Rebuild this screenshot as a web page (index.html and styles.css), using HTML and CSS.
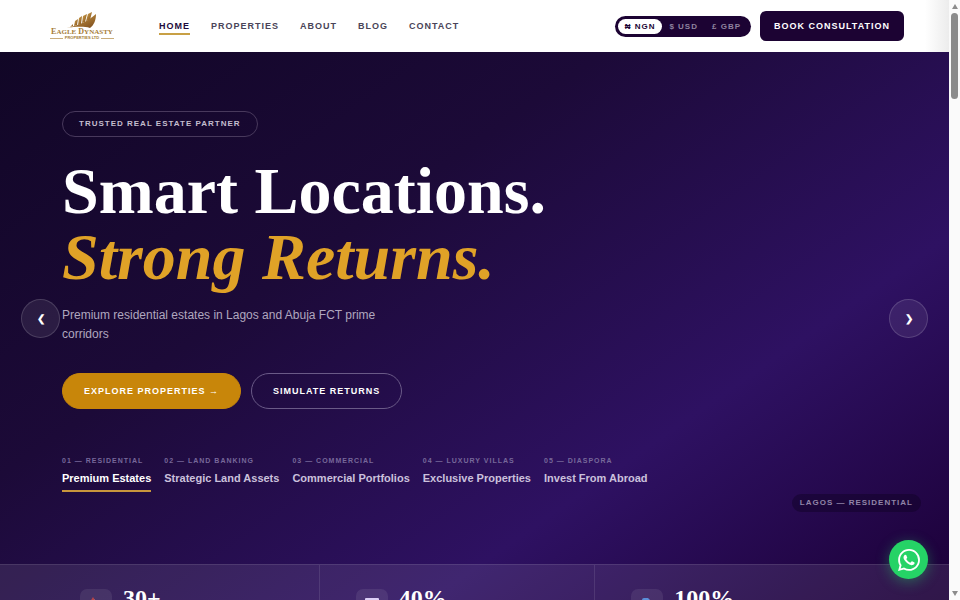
FILE: index.html
```
<!DOCTYPE html>
<html lang="en">
<head>
    <meta charset="UTF-8">
    <meta name="viewport" content="width=device-width, initial-scale=1">
    <title>Eagle Dynasty Properties Ltd</title>
    <link rel="stylesheet" href="styles.css">
</head>
<body>
<div class="window">
    <div class="page">
        <header class="header">
            <a class="logo" href="#">
                <svg class="logo-wing" width="34" height="18" viewBox="0 0 34 18" aria-hidden="true">
                    <defs>
                        <linearGradient id="gold" x1="0" y1="0" x2="1" y2="1">
                            <stop offset="0" stop-color="#d9a94e"/>
                            <stop offset="1" stop-color="#7a4a1c"/>
                        </linearGradient>
                    </defs>
                    <g fill="url(#gold)">
                        <path d="M5 15 L8 12 L8 14 Z"/>
                        <path d="M9 14 L10 9 L13 7 L12 13 Z"/>
                        <path d="M13 13 L14 6 L17 4 L16 12 Z"/>
                        <path d="M17 11 L18 4 L22 2 L20 10 Z"/>
                        <path d="M21 9 L23 2 L27 0 L25 8 Z"/>
                        <path d="M1 16 C12 14 22 10 31 2 C31 8 29 13 25 16 C18 14 10 15 1 16 Z"/>
                    </g>
                </svg>
                <span class="logo-name">E<small>AGLE</small> D<small>YNASTY</small></span>
                <span class="logo-sub">PROPERTIES LTD</span>
            </a>
            <nav class="nav">
                <a class="active" href="#">HOME</a>
                <a href="#">PROPERTIES</a>
                <a href="#">ABOUT</a>
                <a href="#">BLOG</a>
                <a href="#">CONTACT</a>
            </nav>
            <div class="header-right">
                <div class="currency">
                    <button class="active" type="button">₦ NGN</button>
                    <button type="button">$ USD</button>
                    <button type="button">£ GBP</button>
                </div>
                <a class="btn-book" href="#">BOOK CONSULTATION</a>
            </div>
        </header>

        <main class="hero">
            <div class="hero-content">
                <span class="badge">TRUSTED REAL ESTATE PARTNER</span>
                <h1>Smart Locations.<br><em>Strong Returns.</em></h1>
                <p class="lead">Premium residential estates in Lagos and Abuja FCT prime corridors</p>
                <div class="actions">
                    <a class="btn btn-gold" href="#">EXPLORE PROPERTIES →</a>
                    <a class="btn btn-line" href="#">SIMULATE RETURNS</a>
                </div>
                <div class="tabs">
                    <button class="tab active" type="button"><small>01 — RESIDENTIAL</small><span>Premium Estates</span></button>
                    <button class="tab" type="button"><small>02 — LAND BANKING</small><span>Strategic Land Assets</span></button>
                    <button class="tab" type="button"><small>03 — COMMERCIAL</small><span>Commercial Portfolios</span></button>
                    <button class="tab" type="button"><small>04 — LUXURY VILLAS</small><span>Exclusive Properties</span></button>
                    <button class="tab" type="button"><small>05 — DIASPORA</small><span>Invest From Abroad</span></button>
                </div>
            </div>

            <button class="arrow arrow-prev" type="button" aria-label="Previous slide">❮</button>
            <button class="arrow arrow-next" type="button" aria-label="Next slide">❯</button>
            <span class="place">LAGOS — RESIDENTIAL</span>

            <section class="stats">
                <div class="stat">
                    <span class="stat-icon">
                        <svg width="18" height="18" viewBox="0 0 18 18" aria-hidden="true">
                            <path d="M2 18 V9 L7 3 L10 7 V18 Z" fill="#e8d9d4"/>
                            <path d="M1 9 L6 1 L11 9 L10 10 L6 4 L2 10 Z" fill="#b5454a"/>
                            <path d="M10 9 H16 V18 H10 Z" fill="#8d6a72"/>
                        </svg>
                    </span>
                    <strong>30+</strong>
                </div>
                <div class="stat">
                    <span class="stat-icon">
                        <svg width="18" height="18" viewBox="0 0 18 18" aria-hidden="true">
                            <rect x="2" y="2" width="14" height="14" rx="1" fill="#ddd0f5"/>
                            <path d="M4 13 L8 9 L10 11 L14 6" fill="none" stroke="#c0392b"/>
                        </svg>
                    </span>
                    <strong>40%</strong>
                </div>
                <div class="stat">
                    <span class="stat-icon">
                        <svg width="18" height="18" viewBox="0 0 18 18" aria-hidden="true">
                            <path d="M4 18 V4 Q4 2 6 2 H10 L14 6 V18 Z" fill="#5b8fd9"/>
                            <path d="M6 4 H10 V8 H6 Z" fill="#a9cdf5"/>
                        </svg>
                    </span>
                    <strong>100%</strong>
                </div>
            </section>
        </main>

        <a class="whatsapp" href="#" aria-label="WhatsApp">
            <svg width="22" height="22" viewBox="0 0 24 24" fill="#fff" aria-hidden="true">
                <path d="M17.472 14.382c-.297-.149-1.758-.867-2.03-.967-.273-.099-.471-.148-.67.15-.197.297-.767.966-.94 1.164-.173.199-.347.223-.644.075-.297-.15-1.255-.463-2.39-1.475-.883-.788-1.48-1.761-1.653-2.059-.173-.297-.018-.458.13-.606.134-.133.298-.347.446-.52.149-.174.198-.298.298-.497.099-.198.05-.371-.025-.52-.075-.149-.669-1.612-.916-2.207-.242-.579-.487-.5-.669-.51-.173-.008-.371-.01-.57-.01-.198 0-.52.074-.792.372-.272.297-1.04 1.016-1.04 2.479 0 1.462 1.065 2.875 1.213 3.074.149.198 2.096 3.2 5.077 4.487.709.306 1.262.489 1.694.625.712.227 1.36.195 1.871.118.571-.085 1.758-.719 2.006-1.413.248-.694.248-1.289.173-1.413-.074-.124-.272-.198-.57-.347m-5.421 7.403h-.004a9.87 9.87 0 01-5.031-1.378l-.361-.214-3.741.982.998-3.648-.235-.374a9.86 9.86 0 01-1.51-5.26c.001-5.45 4.436-9.884 9.888-9.884 2.64 0 5.122 1.03 6.988 2.898a9.825 9.825 0 012.893 6.994c-.003 5.45-4.437 9.884-9.885 9.884m8.413-18.297A11.815 11.815 0 0012.05 0C5.495 0 .16 5.335.157 11.892c0 2.096.547 4.142 1.588 5.945L.057 24l6.305-1.654a11.882 11.882 0 005.683 1.448h.005c6.554 0 11.89-5.335 11.893-11.893a11.821 11.821 0 00-3.48-8.413z"/>
            </svg>
        </a>
    </div>

    <div class="scrollbar" aria-hidden="true">
        <i class="scroll-up"></i>
        <i class="scroll-thumb"></i>
        <i class="scroll-down"></i>
    </div>
</div>
</body>
</html>
```
FILE: styles.css
```
*{
    box-sizing: border-box;
    margin: 0;
    padding: 0;
}
body{
    font-family: "Liberation Sans", Arial, sans-serif;
    background: #fff;
}
a{
    color: inherit;
    text-decoration: none;
}
button{
    border: 0;
    background: none;
    color: inherit;
    font-family: inherit;
    cursor: pointer;
}
.window{
    display: flex;
    height: 100vh;
    overflow: hidden;
}
.page{
    position: relative;
    flex: 1;
    display: flex;
    flex-direction: column;
    min-width: 0;
}

/* header */
.header{
    display: flex;
    align-items: center;
    flex: none;
    height: 52px;
    padding: 0 45px 0 50px;
    background: linear-gradient(to left, #ececec, #fff 24px);
}
.logo{
    display: flex;
    flex-direction: column;
    align-items: center;
    width: 64px;
    margin-right: 45px;
    color: #a67c37;
    font-family: "Liberation Serif", serif;
}
.logo-name{
    margin-top: -2px;
    font-size: 8px;
    font-weight: bold;
    line-height: 8px;
    white-space: nowrap;
}
.logo-name small{
    font-size: 7px;
}
.logo-sub{
    display: flex;
    align-items: center;
    gap: 2px;
    width: 100%;
    font-family: "Liberation Sans", sans-serif;
    font-size: 4px;
    font-weight: bold;
    line-height: 4px;
    white-space: nowrap;
}
.logo-sub:before,
.logo-sub:after{
    content: "";
    flex: 1;
    height: 1px;
    background: #c9ad7c;
}
.nav{
    display: flex;
    gap: 21px;
    padding-top: 2px;
    color: #4a4458;
    font-size: 9px;
    font-weight: bold;
    letter-spacing: 1px;
}
.nav a{
    line-height: 14px;
    border-bottom: 2px solid transparent;
}
.nav .active{
    color: #1e0a3c;
    border-color: #c8a045;
}
.header-right{
    display: flex;
    align-items: center;
    gap: 9px;
    margin-left: auto;
}
.currency{
    display: flex;
    padding: 3px;
    border-radius: 11px;
    background: #1c0333;
    color: #8f829f;
}
.currency button{
    padding: 0 7px;
    border-radius: 8px;
    font-size: 8px;
    font-weight: bold;
    line-height: 15px;
    letter-spacing: 1px;
}
.currency .active{
    background: #fff;
    color: #1c0333;
}
.btn-book{
    padding: 0 14px;
    border-radius: 6px;
    background: #1c0333;
    color: #fff;
    font-size: 9px;
    font-weight: bold;
    line-height: 30px;
    letter-spacing: 1px;
}

/* hero */
.hero{
    position: relative;
    flex: 1;
    display: flex;
    flex-direction: column;
    justify-content: space-between;
    min-height: 0;
    overflow: hidden;
    background: linear-gradient(145deg, #110626 0%, #1c0a38 35%, #2e1162 70%, #1c0038 100%);
    color: #fff;
}
.hero-content{
    padding: 59px 62px 0;
}
.badge{
    display: inline-block;
    padding: 0 16px;
    border: 1px solid #48395c;
    border-radius: 13px;
    color: #c4bdce;
    font-size: 8px;
    font-weight: bold;
    line-height: 24px;
    letter-spacing: 1px;
}
h1{
    margin-top: 21px;
    font-family: "Liberation Serif", serif;
    font-size: 66px;
    line-height: 66px;
}
h1 em{
    color: #e0a227;
}
.lead{
    max-width: 340px;
    margin-top: 16px;
    color: #b0a7bf;
    font-size: 12px;
    line-height: 19px;
}
.actions{
    display: flex;
    gap: 10px;
    margin-top: 29px;
}
.btn{
    padding: 0 21px;
    border: 1px solid #c8860a;
    border-radius: 18px;
    font-size: 9px;
    font-weight: bold;
    line-height: 34px;
    letter-spacing: 1px;
}
.btn-gold{
    background: #c8860a;
}
.btn-line{
    border-color: #6a5a87;
}
.tabs{
    display: flex;
    gap: 13px;
    margin-top: 47px;
}
.tab{
    padding-bottom: 5px;
    border-bottom: 2px solid transparent;
    color: #cbc1dc;
    font-size: 11px;
    font-weight: bold;
    text-align: left;
    white-space: nowrap;
}
.tab small{
    display: block;
    margin-bottom: 5px;
    color: #77689a;
    font-size: 7px;
    line-height: 10px;
    letter-spacing: 1px;
}
.tab span{
    display: block;
    line-height: 14px;
}
.tab.active{
    border-color: #c8963c;
    color: #fff;
}
.arrow{
    position: absolute;
    top: 247px;
    width: 39px;
    height: 39px;
    border: 1px solid rgba(255, 255, 255, .15);
    border-radius: 50%;
    background: rgba(255, 255, 255, .08);
    color: #fff;
    font-size: 10px;
    font-weight: bold;
}
.arrow-prev{
    left: 21px;
}
.arrow-next{
    right: 21px;
}
.place{
    position: absolute;
    right: 28px;
    bottom: 88px;
    padding: 0 8px;
    border-radius: 9px;
    background: rgba(15, 3, 35, .45);
    color: #9184a8;
    font-size: 8px;
    font-weight: bold;
    line-height: 18px;
    letter-spacing: 1px;
}

/* stats */
.stats{
    display: grid;
    grid-template-columns: repeat(3, 1fr);
    flex: none;
    height: 36px;
    padding: 0 78px 0 44px;
    overflow: hidden;
    border-top: 1px solid rgba(255, 255, 255, .1);
    background: rgba(255, 255, 255, .09);
}
.stat{
    display: flex;
    gap: 11px;
    height: 80px;
    padding: 24px 36px;
    border-right: 1px solid rgba(255, 255, 255, .1);
}
.stat:last-child{
    border-right: 0;
}
.stat-icon{
    display: flex;
    align-items: center;
    justify-content: center;
    width: 32px;
    height: 32px;
    border-radius: 7px;
    background: rgba(255, 255, 255, .08);
}
.stat strong{
    font-family: "Liberation Serif", serif;
    font-size: 24px;
    line-height: 18px;
}

.whatsapp{
    position: absolute;
    right: 21px;
    bottom: 21px;
    display: flex;
    align-items: center;
    justify-content: center;
    width: 39px;
    height: 39px;
    border-radius: 50%;
    background: #25d366;
    box-shadow: 0 3px 14px rgba(37, 211, 102, .4);
}

/* scrollbar */
.scrollbar{
    display: flex;
    flex-direction: column;
    align-items: center;
    width: 11px;
    padding: 4px 0;
    background: #fafafa;
}
.scroll-up,
.scroll-down{
    border: 3px solid transparent;
}
.scroll-up{
    border-top: 0;
    border-bottom: 5px solid #8b8b8b;
}
.scroll-down{
    margin-top: auto;
    border-top: 5px solid #8b8b8b;
    border-bottom: 0;
}
.scroll-thumb{
    width: 7px;
    height: 86px;
    margin-top: 4px;
    border-radius: 4px;
    background: #8b8b8b;
}
```
